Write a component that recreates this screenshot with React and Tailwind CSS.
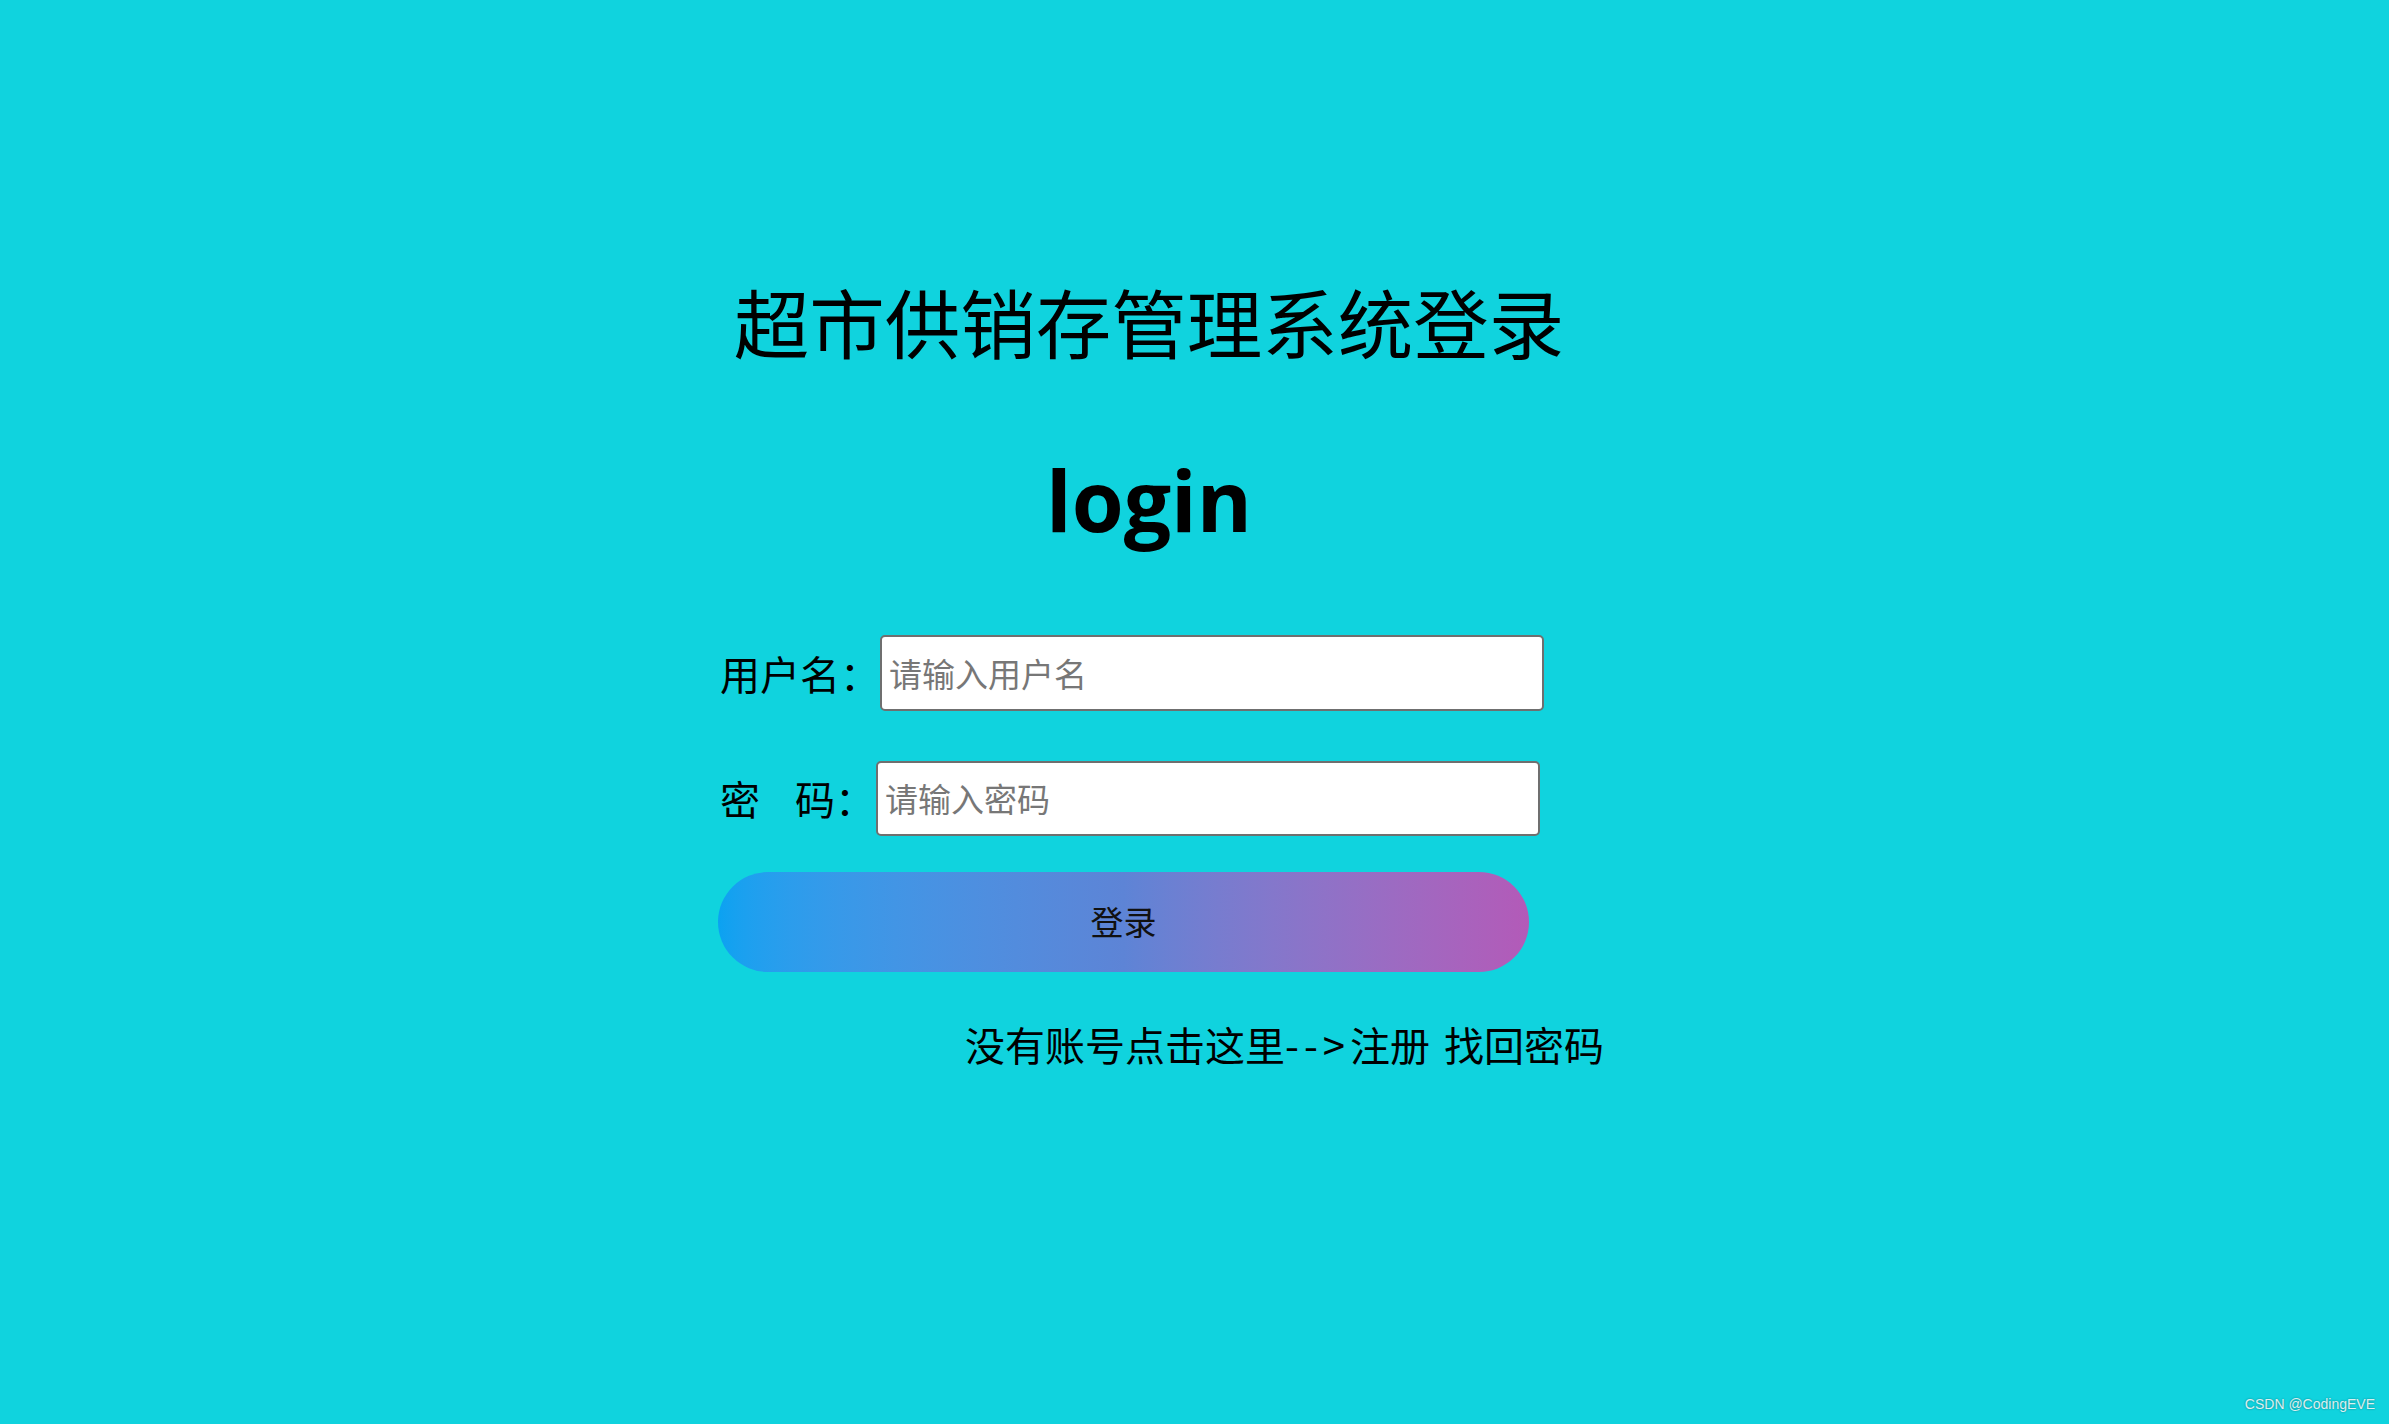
export default function App() {
  return (
    <div className="relative min-h-screen overflow-hidden bg-[#10d3de] font-['Noto_Sans_CJK_SC','Noto_Sans',sans-serif] text-black">
      <div className="ml-[718px] flex w-[862px] flex-col pt-[283px]">
        {/* title */}
        <h1 className="text-center text-[75.5px] font-normal leading-none whitespace-nowrap">
          超市供销存管理系统登录
        </h1>
        <h2 className="mt-[99px] text-center font-['Open_Sans',sans-serif] text-[84px] font-bold leading-none">
          login
        </h2>

        {/* form */}
        <div className="mt-[93px] flex items-center pl-[2px]">
          <label className="w-[160px] shrink-0 text-[40px] leading-none whitespace-nowrap">
            用户名：
          </label>
          <input
            type="text"
            placeholder="请输入用户名"
            className="h-[76px] w-[664px] rounded-[5px] border-2 border-[#6f6f6f] bg-white px-[7px] text-[33px] outline-none placeholder:text-[#777]"
          />
        </div>
        <div className="mt-[50px] flex items-center pl-[2px]">
          <label className="w-[156px] shrink-0 text-[40px] leading-none whitespace-nowrap">
            密<span className="ml-[35px]">码</span>：
          </label>
          <input
            type="password"
            placeholder="请输入密码"
            className="h-[75px] w-[664px] rounded-[5px] border-2 border-[#6f6f6f] bg-white px-[7px] text-[33px] outline-none placeholder:text-[#777]"
          />
        </div>

        <button className="mt-[36px] flex h-[100px] w-[811px] items-center justify-center rounded-full bg-gradient-to-r from-[#0aa2f1] via-[#5d84d6] to-[#b35ab8] text-[33px] leading-none text-[#111]">
          登录
        </button>

        <p className="mt-[52px] ml-[247px] text-[40px] leading-none whitespace-nowrap">
          没有账号点击这里<span className="tracking-[5px]">--&gt;</span>注册
          <span className="ml-[14px]">找回密码</span>
        </p>
      </div>

      {/* watermark */}
      <span className="absolute right-[14px] bottom-[9px] font-['Liberation_Sans',sans-serif] text-[14px] text-white/85 [text-shadow:0_0_2px_rgba(0,0,0,0.45)]">
        CSDN @CodingEVE
      </span>
    </div>
  );
}
